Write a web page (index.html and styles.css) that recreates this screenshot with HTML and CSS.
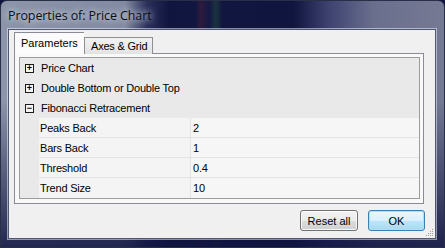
FILE: index.html
```html
<!DOCTYPE html>
<html lang="en">
<head>
    <meta charset="UTF-8">
    <title>Properties of: Price Chart</title>
    <link rel="stylesheet" href="styles.css">
</head>
<body>
    <div class="window">
        <div class="titlebar">
            <span class="title">Properties of: Price Chart</span>
        </div>
        <div class="client">
            <div class="tabs">
                <div class="tab selected">Parameters</div>
                <div class="tab">Axes &amp; Grid</div>
            </div>
            <div class="panel">
                <div class="grid">
                    <div class="category"><span class="box">+</span>Price Chart</div>
                    <div class="category"><span class="box">+</span>Double Bottom or Double Top</div>
                    <div class="category"><span class="box">&minus;</span>Fibonacci Retracement</div>
                    <div class="prop"><span class="name">Peaks Back</span><span class="value">2</span></div>
                    <div class="prop"><span class="name">Bars Back</span><span class="value">1</span></div>
                    <div class="prop"><span class="name">Threshold</span><span class="value">0.4</span></div>
                    <div class="prop"><span class="name">Trend Size</span><span class="value">10</span></div>
                </div>
            </div>
            <div class="buttons">
                <button class="btn">Reset all</button>
                <button class="btn default">OK</button>
            </div>
            <svg class="grip" width="8" height="8" viewBox="0 0 8 8">
                <g fill="#9a9a9a">
                    <rect x="6" y="0" width="1" height="1"/>
                    <rect x="4" y="2" width="1" height="1"/><rect x="6" y="2" width="1" height="1"/>
                    <rect x="2" y="4" width="1" height="1"/><rect x="4" y="4" width="1" height="1"/><rect x="6" y="4" width="1" height="1"/>
                    <rect x="0" y="6" width="1" height="1"/><rect x="2" y="6" width="1" height="1"/><rect x="4" y="6" width="1" height="1"/><rect x="6" y="6" width="1" height="1"/>
                </g>
            </svg>
        </div>
    </div>
</body>
</html>
```

FILE: styles.css
```css
body {
    margin: 0;
    font-family: "Liberation Sans", Arial, sans-serif;
    font-size: 11px;
    color: #000;
    background: #0f1440;
}
.window {
    width: 445px;
    height: 248px;
    box-sizing: border-box;
    display: flex;
    flex-direction: column;
    border-radius: 7px 7px 0 0;
    border: 1px solid #2a2f48;
    background:
        linear-gradient(to bottom, rgba(15, 20, 64, 0) 40%, rgba(15, 20, 64, 0.85) 100%),
        linear-gradient(90deg, #8c95aa 0%, #828ba1 28%, #2a305c 33%, #10153f 38%, #121742 44%, #2f1a3c 45%, #141844 47%, #1a333e 48.5%, #111641 50%, #10153f 66%, #3d4270 74%, #6a6f8e 84%, #757993 100%);
}
.titlebar {
    height: 28px;
    padding-left: 7px;
    display: flex;
    align-items: center;
}
.title {
    font-family: "Open Sans", "Noto Sans", sans-serif;
    font-size: 12.5px;
    color: #0b0e16;
    text-shadow: 0 0 6px rgba(230, 235, 245, 0.9), 0 0 10px rgba(220, 225, 240, 0.7);
    letter-spacing: -0.1px;
}
.client {
    position: relative;
    flex: 1;
    margin: 0 8px 8px 7px;
    background: #f0f0f0;
    border: 1px solid #505670;
    box-shadow: 0 0 0 1px rgba(235, 240, 250, 0.55);
    display: flex;
    flex-direction: column;
    padding: 2px 11px 0 5px;
}
.tabs {
    display: flex;
    align-items: flex-end;
    height: 22px;
    position: relative;
    z-index: 1;
    margin-bottom: -1px;
}
.tab {
    box-sizing: border-box;
    height: 17px;
    padding: 2px 4px 0 6px;
    border: 1px solid #8e8f8f;
    border-bottom: none;
    background: linear-gradient(#f2f2f2, #e3e3e3);
    letter-spacing: -0.2px;
}
.tab.selected {
    height: 22px;
    width: 70px;
    padding: 4px 0 0 6px;
    background: #fbfbfb;
    border-color: #898c95;
    border-right: none;
    letter-spacing: 0;
}
.panel {
    height: 151px;
    box-sizing: border-box;
    border: 1px solid #898c95;
    background: #f9f9f9;
    padding: 3px 3px 4px 4px;
}
.grid {
    border: 1px solid #9c9c9c;
    background: #e9e9e9;
    letter-spacing: -0.2px;
}
.category {
    height: 20px;
    display: flex;
    align-items: center;
    padding-left: 5px;
}
.box {
    box-sizing: border-box;
    width: 9px;
    height: 9px;
    border: 1px solid #1a1a1a;
    background: #f4f4f4;
    font-size: 9px;
    line-height: 6px;
    text-align: center;
    font-weight: bold;
    letter-spacing: 0;
    margin-right: 7px;
}
.prop {
    height: 20px;
    display: flex;
    margin-left: 19px;
    box-sizing: border-box;
    border-bottom: 1px solid #e4e4e4;
}
.prop:last-child {
    border-bottom: none;
}
.name {
    width: 152px;
    box-sizing: border-box;
    background: #f4f4f4;
    border-right: 1px solid #e4e4e4;
    padding: 4px 0 0 1px;
}
.value {
    flex: 1;
    background: #f6f6f6;
    padding: 4px 0 0 2px;
}
.buttons {
    display: flex;
    justify-content: flex-end;
    gap: 10px;
    padding-top: 6px;
    margin-right: -1px;
}
.btn {
    width: 58px;
    height: 21px;
    font-family: "Liberation Sans", Arial, sans-serif;
    font-size: 11px;
    color: #000;
    border: 1px solid #707070;
    border-radius: 3px;
    background: linear-gradient(#f2f2f2 0%, #ebebeb 50%, #dddddd 51%, #cfcfcf 100%);
    box-shadow: inset 0 0 0 1px rgba(255, 255, 255, 0.8);
    padding: 0;
}
.btn.default {
    width: 57px;
    border-color: #3c7fb1;
    background: linear-gradient(#eaf6fd 0%, #d9f0fc 50%, #bee6fd 51%, #a7d9f5 100%);
    box-shadow: inset 0 0 0 1px #a7e2fb;
}
.grip {
    position: absolute;
    right: 1px;
    bottom: 1px;
}
```
